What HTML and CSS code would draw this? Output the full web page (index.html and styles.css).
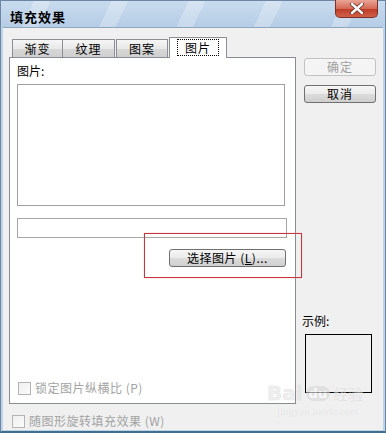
FILE: index.html
```html
<!DOCTYPE html>
<html lang="zh-CN">
<head>
  <meta charset="UTF-8" />
  <title>填充效果</title>
  <link rel="stylesheet" href="styles.css">
</head>
<body>
  <div class="window">
    <div class="titlebar">
      <span class="title">填充效果</span>
      <div class="close">
        <svg width="18" height="11" viewBox="0 0 18 11">
          <path d="M4 1 L14 10 M14 1 L4 10" stroke="#6b2a20" stroke-width="4" stroke-linecap="round"/>
          <path d="M4 1 L14 10 M14 1 L4 10" stroke="#fff" stroke-width="2.4" stroke-linecap="round"/>
        </svg>
      </div>
    </div>

    <div class="client">
      <div class="main">
        <div class="left">
          <div class="tabs">
            <div class="tab t1">渐变</div>
            <div class="tab t2">纹理</div>
            <div class="tab t3">图案</div>
            <div class="tab active"><span class="focus">图片</span></div>
          </div>
          <div class="panel">
            <div class="label">图片:</div>
            <div class="picture"></div>
            <div class="field"></div>
            <div class="btn-row">
              <div class="btn pick">选择图片 (<u>L</u>)...</div>
            </div>
            <label class="check inner"><span class="box"></span>锁定图片纵横比 (P)</label>
          </div>
        </div>

        <div class="right">
          <div class="btn side disabled">确定</div>
          <div class="btn side">取消</div>
          <div class="sample">
            <div class="label">示例:</div>
            <div class="preview"></div>
          </div>
        </div>
      </div>

      <label class="check outer"><span class="box"></span>随图形旋转填充效果 (W)</label>
    </div>

    <!-- 截图里的标注框和水印 -->
    <div class="mark"></div>
    <div class="watermark">
      <span class="wm-bai">Bai</span><span class="wm-du">du</span><span class="wm-jy">经验</span>
      <div class="wm-url">jingyan.baidu.com</div>
    </div>
  </div>
</body>
</html>
```

FILE: styles.css
```css
* { box-sizing: border-box; }
body { margin: 0; background: #fff; font-family: "Noto Sans CJK SC", "DejaVu Sans", sans-serif; font-size: 12px; color: #000; }

.window {
  position: relative;
  width: 386px;
  height: 433px;
  background: #bfd3e8;
  border: 1px solid #6d86a3;
  border-bottom: 2px solid #3f6f8c;
  display: flex;
  flex-direction: column;
}

.titlebar {
  height: 26px;
  display: flex;
  justify-content: space-between;
  background:
    repeating-linear-gradient(115deg, rgba(255,255,255,0) 0 30px, rgba(255,255,255,0.25) 30px 45px, rgba(255,255,255,0) 45px 70px),
    linear-gradient(#c9dbee, #b6cde6);
}
.title { font-weight: bold; font-size: 13px; line-height: 14px; padding: 9px 0 0 9px; letter-spacing: 1px; }
.close {
  width: 43px;
  height: 18px;
  margin-right: 7px;
  margin-top: -1px;
  border: 1px solid #7c3126;
  border-top: none;
  border-radius: 0 0 5px 5px;
  background: linear-gradient(#e9a597, #d46a56 50%, #bd3a25 51%, #d2604a);
  display: flex;
  align-items: center;
  justify-content: center;
}

.client {
  flex: 1;
  margin: 0 2px 1px 2px;
  background: #f0f0f0;
  border-top: 1px solid #8ea6c0;
  padding-top: 9px;
}

.main { display: flex; }
.left { width: 287px; margin-left: 6px; }

.tabs { display: flex; align-items: flex-end; height: 20px; padding-left: 3px; }
.tab {
  height: 18px;
  border: 1px solid #8c8e94;
  border-bottom: none;
  background: linear-gradient(#f6f6f6, #e8e8e8 50%, #d8d8d8 51%, #cfcfcf);
  text-align: center;
  line-height: 17px;
  font-size: 12px;
  letter-spacing: 1px;
}
.t1 { width: 51px; }
.t2 { width: 53px; margin-left: -1px; }
.t3 { width: 52px; margin-left: 1px; }
.tab.active {
  width: 58px;
  height: 21px;
  margin-left: 1px;
  margin-bottom: -1px;
  background: #fff;
  position: relative;
  padding-top: 1px;
}
.focus { display: inline-block; border: 1px dotted #000; padding: 0 7px; line-height: 15px; }

.panel {
  height: 347px;
  background: #fff;
  border: 1px solid #898c95;
  padding: 6px 9px 8px 7px;
  display: flex;
  flex-direction: column;
}
.label { line-height: 14px; }
.picture { margin-top: 6px; height: 122px; width: 268px; border: 1px solid #a0a0a0; }
.field { margin-top: 12px; height: 20px; width: 270px; border: 1px solid #a6a6a6; }
.btn-row { display: flex; justify-content: flex-end; margin-top: 11px; }

.btn {
  height: 18px;
  border: 1px solid #707070;
  border-radius: 3px;
  background: linear-gradient(#f6f6f6, #ebebeb 50%, #dcdcdc 51%, #cfcfcf);
  text-align: center;
  line-height: 16px;
  font-size: 12px;
  letter-spacing: 1px;
}
.btn u { text-decoration: underline; }
.pick { width: 117px; letter-spacing: 0.5px; }

.check { display: flex; align-items: center; color: #a3a3a3; line-height: 14px; letter-spacing: 0.5px; }
.box { width: 13px; height: 13px; border: 1px solid #b4b4b4; background: linear-gradient(135deg, #f0f0f0, #fafafa); margin-right: 4px; }
.check.inner { margin-top: auto; padding-left: 1px; }
.check.outer { margin: 10px 0 0 9px; }

.right { flex: 1; display: flex; flex-direction: column; padding-left: 8px; }
.side { width: 72px; }
.right .side:first-child { margin-top: 21px; }
.right .side + .side { margin-top: 9px; }
.disabled { color: #a0a0a0; border-color: #c2c2c2; background: #f4f4f4; }
.sample { margin-top: auto; padding: 0 0 11px 0; }
.sample .label { margin-left: -2px; }
.preview { margin: 6px 0 0 1px; width: 67px; height: 59px; border: 1px solid #000; background: #f0f0f0; }

.mark {
  position: absolute;
  left: 143px;
  top: 232px;
  width: 158px;
  height: 45px;
  border: 1px solid #c8363b;
  box-shadow: 0 0 1px #e9a0a0;
}

.watermark { position: absolute; left: 266px; top: 380px; opacity: 0.6; white-space: nowrap; }
.wm-bai { font-family: "DejaVu Sans", sans-serif; font-weight: bold; font-size: 20px; color: #e4e4e4; -webkit-text-stroke: 0.5px #d6d6d6; }
.wm-du { display: inline-block; font-family: "DejaVu Sans", sans-serif; font-weight: bold; font-size: 13px; line-height: 15px; color: #fff; background: #d8d8d8; border-radius: 8px; padding: 0 3px; margin: 0 3px; vertical-align: 2px; }
.wm-jy { font-size: 15px; color: #dcdcdc; }
.wm-url { font-family: "Liberation Serif", serif; font-size: 11px; color: #e4e4e4; margin-left: 10px; }
```
